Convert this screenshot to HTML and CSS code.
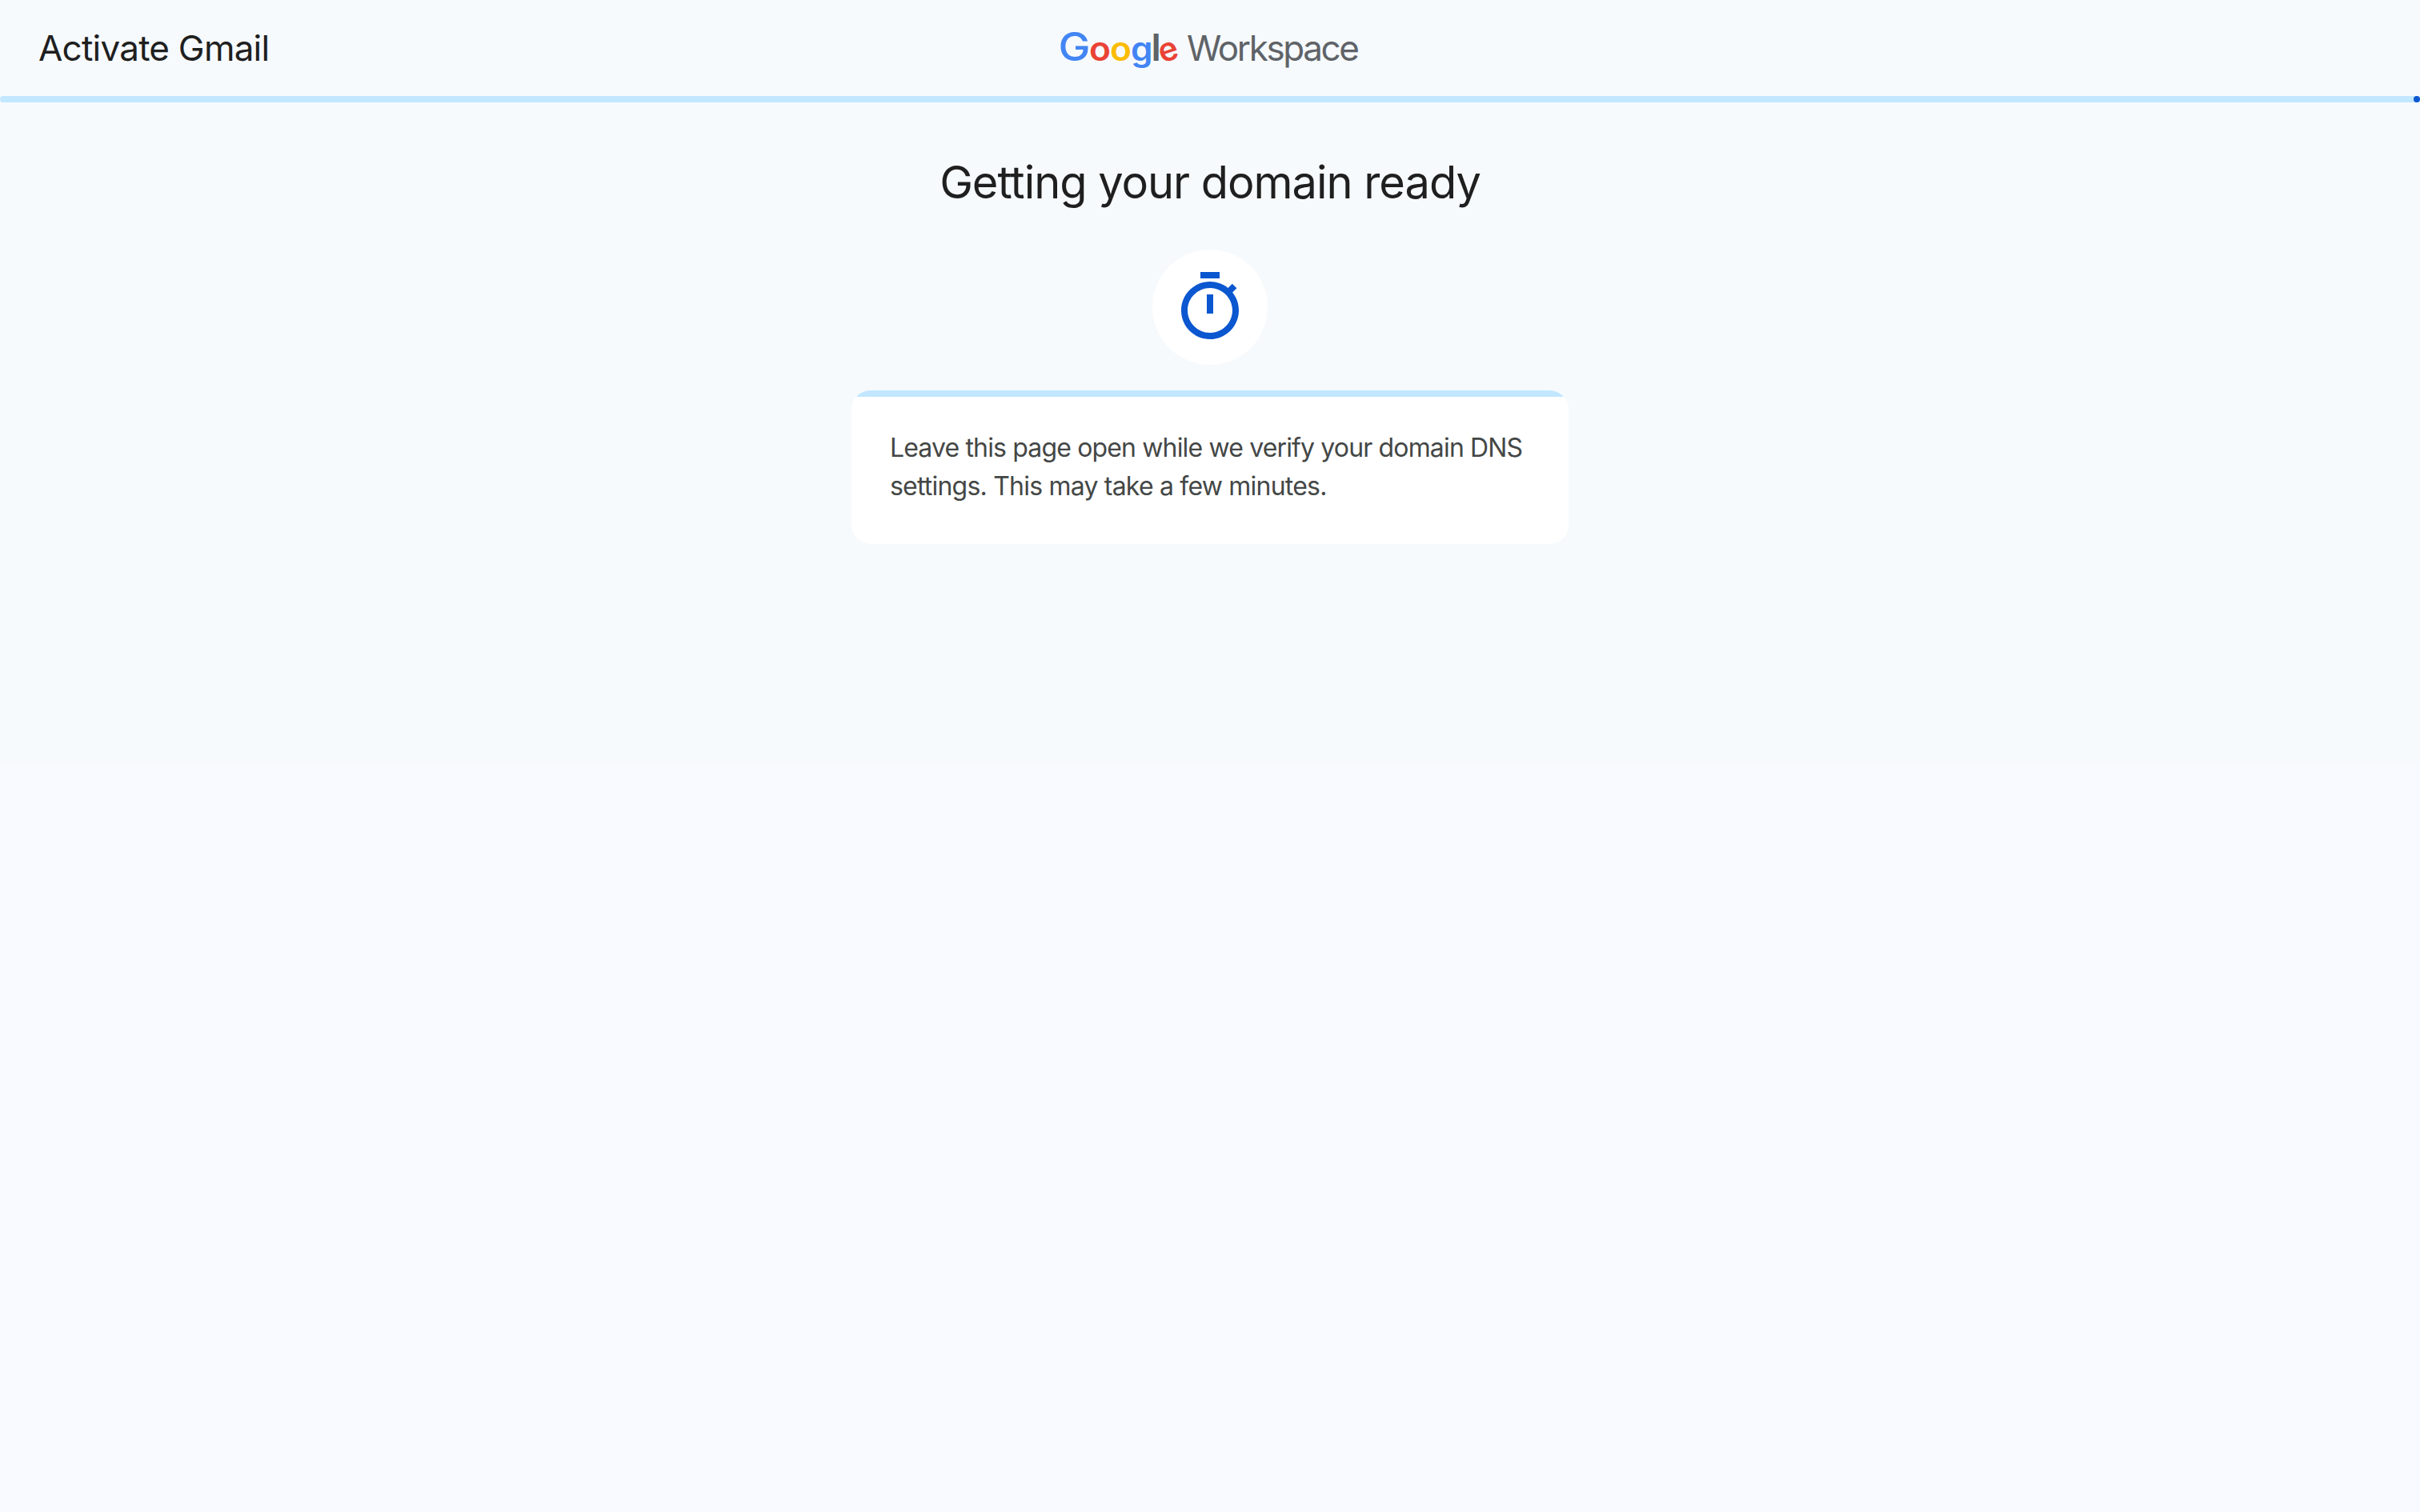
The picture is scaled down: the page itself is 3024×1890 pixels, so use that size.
FILE: index.html
```html
<!DOCTYPE html>
<html lang="en">
<head>
  <meta charset="UTF-8">
  <meta name="viewport" content="width=device-width, initial-scale=1.0">
  <title>Activate Gmail</title>
  <link rel="stylesheet" href="styles.css">
</head>
<body>
  <div class="page">
    <header class="topbar">
      <span class="topbar-title">Activate Gmail</span>
      <svg class="logo" width="400" height="104" viewBox="-10 0 400 104" role="img" aria-label="Google Workspace">
        <g class="logo-google">
          <text x="0.5" y="67.5" class="blue big" textLength="40" lengthAdjust="spacingAndGlyphs">G</text>
          <text x="39" y="67.5" class="red" textLength="27" lengthAdjust="spacingAndGlyphs">o</text>
          <text x="65" y="67.5" class="yellow" textLength="27" lengthAdjust="spacingAndGlyphs">o</text>
          <text x="91" y="67.5" class="blue" textLength="27.5" lengthAdjust="spacingAndGlyphs">g</text>
          <text x="116.5" y="67.5" class="grey tall">l</text>
          <text x="0" y="0" class="red" transform="translate(130 71) rotate(-18)">e</text>
        </g>
        <text x="161" y="67.5" class="logo-workspace" textLength="216" lengthAdjust="spacing">Workspace</text>
      </svg>
    </header>

    <div class="progress">
      <div class="progress-dot"></div>
    </div>

    <main>
      <h1>Getting your domain ready</h1>

      <div class="icon-circle">
        <svg width="96" height="96" viewBox="0 0 24 24">
          <path d="M15 1H9v2h6V1zm-4 13h2V8h-2v6zm8.03-6.61l1.32-1.32-1.41-1.41-1.32 1.32C16.07 4.74 14.12 4 12 4c-4.97 0-9 4.03-9 9s4.02 9 9 9 9-4.03 9-9c0-2.12-.74-4.07-1.97-5.61zM12 20c-3.87 0-7-3.13-7-7s3.13-7 7-7 7 3.13 7 7-3.13 7-7 7z"/>
        </svg>
      </div>

      <div class="card">
        <p>
          <span class="line-one">Leave this page open while we verify your domain DNS</span><br>
          <span class="line-two">settings. This may take a few minutes.</span>
        </p>
      </div>
    </main>
  </div>
</body>
</html>
```
FILE: styles.css
```css
* {
  box-sizing: border-box;
  margin: 0;
}

body {
  background-color: #f8faff;
  min-height: 100vh;
  font-family: Inter, "Liberation Sans", sans-serif;
  color: #1f1f1f;
}

.page {
  height: 957px;
  background-color: #f6fafd;
}

.topbar {
  display: grid;
  grid-template-columns: 1fr auto 1fr;
  align-items: center;
  height: 120px;
  padding: 0 48px;
}

.topbar-title {
  font-size: 44px;
  line-height: 56px;
  letter-spacing: -0.77px;
}

.logo {
  display: block;
}

.logo-google {
  font-size: 41px;
  font-weight: 600;
}

.logo-google .big {
  font-size: 49px;
  font-weight: 500;
}

.logo-google .tall {
  font-size: 47px;
}

.logo-workspace {
  font-size: 44px;
  fill: #5f6368;
}

.blue {
  fill: #4285f4;
}
.red {
  fill: #ea4335;
}
.yellow {
  fill: #fbbc04;
}
.grey {
  fill: #5f6368;
}

.progress {
  display: flex;
  justify-content: flex-end;
  height: 8px;
  border-radius: 4px;
  background-color: #c2e7ff;
}

.progress-dot {
  width: 8px;
  height: 8px;
  border-radius: 50%;
  background-color: #0b57d0;
}

main {
  display: flex;
  flex-direction: column;
  align-items: center;
  padding-top: 64px;
}

h1 {
  font-size: 56px;
  font-weight: 400;
  line-height: 72px;
  letter-spacing: -1.05px;
}

.icon-circle {
  display: flex;
  align-items: center;
  justify-content: center;
  width: 144px;
  height: 144px;
  margin: 48px 0 32px;
  border-radius: 50%;
  background-color: white;
}

.icon-circle svg {
  fill: #0b57d0;
}

.card {
  width: 896px;
  height: 192px;
  padding: 48px;
  border-radius: 24px;
  background: linear-gradient(#c2e7ff 8px, white 8px);
}

.card p {
  font-size: 32px;
  line-height: 48px;
  color: #444746;
  white-space: nowrap;
}

.line-one {
  letter-spacing: -0.85px;
}

.line-two {
  letter-spacing: -0.79px;
}
```
